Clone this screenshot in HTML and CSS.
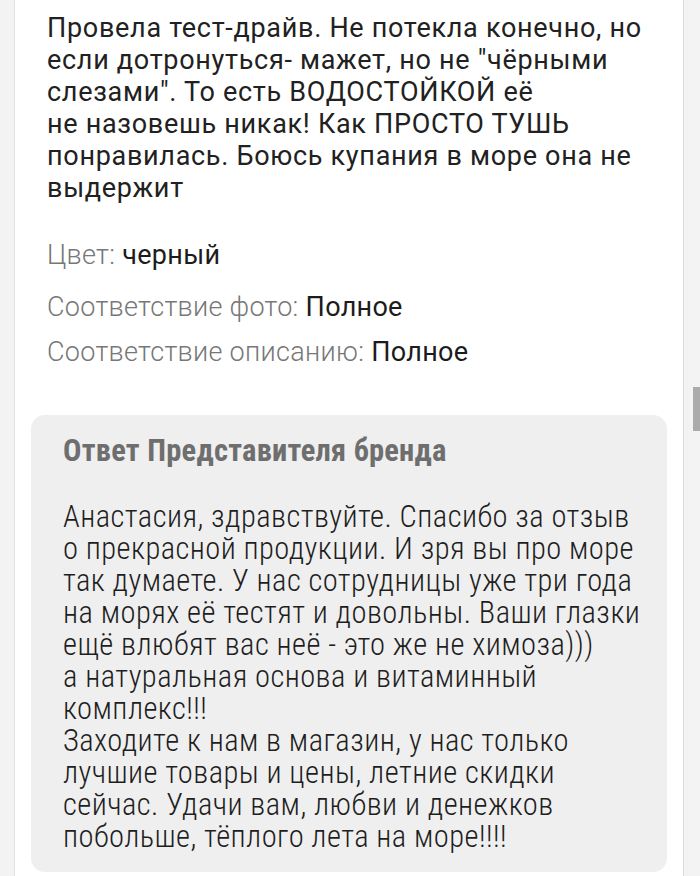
FILE: index.html
```html
<!DOCTYPE html>
<html lang="ru">
<head>
<meta charset="utf-8">
<link rel="stylesheet" href="styles.css">
</head>
<body>
<div class="page">
  <div class="card">
    <p class="review">Провела тест-драйв. Не потекла конечно, но<br>если дотронуться- мажет, но не "чёрными<br>слезами". То есть ВОДОСТОЙКОЙ её<br>не назовешь никак! Как ПРОСТО ТУШЬ<br>понравилась. Боюсь купания в море она не<br>выдержит</p>
    <div class="props">
      <div class="prop p1"><span class="label">Цвет:</span> <span class="value">черный</span></div>
      <div class="prop p2"><span class="label">Соответствие фото:</span> <span class="value">Полное</span></div>
      <div class="prop p3"><span class="label">Соответствие описанию:</span> <span class="value">Полное</span></div>
    </div>
    <div class="answer">
      <div class="answer-title">Ответ Представителя бренда</div>
      <p class="answer-text">Анастасия, здравствуйте. Спасибо за отзыв<br>о прекрасной продукции. И зря вы про море<br>так думаете. У нас сотрудницы уже три года<br>на морях её тестят и довольны. Ваши глазки<br>ещё влюбят вас неё - это же не химоза)))<br>а натуральная основа и витаминный<br>комплекс!!!<br>Заходите к нам в магазин, у нас только<br>лучшие товары и цены, летние скидки<br>сейчас. Удачи вам, любви и денежков<br>побольше, тёплого лета на море!!!!</p>
    </div>
  </div>
  <div class="track">
    <div class="thumb"></div>
  </div>
</div>
</body>
</html>
```

FILE: styles.css
```css
html, body {
  margin: 0;
  padding: 0;
  background: #f3f3f3;
  height: 876px;
  overflow: hidden;
}
.page {
  display: flex;
  height: 876px;
  padding-left: 14px;
}
.card {
  width: 668px;
  background: #ffffff;
  border-left: 1px solid #e2e2e2;
  border-right: 1px solid #dcdcdc;
  padding-top: 12px;
  font-family: Roboto, "Noto Sans", sans-serif;
  color: #212121;
}
.review {
  margin: 0;
  padding-left: 32px;
  font-size: 27px;
  line-height: 32px;
  font-weight: 370;
  white-space: nowrap;
  letter-spacing: 0.7px;
}
.props {
  padding-left: 32px;
  font-size: 27px;
  line-height: 32px;
  white-space: nowrap;
  letter-spacing: 0.3px;
}
.prop.p1 { margin-top: 35px; }
.prop.p2 { margin-top: 20px; }
.prop.p3 { margin-top: 13px; }
.label {
  color: #777777;
  font-weight: 300;
}
.value {
  color: #1c1c1c;
  font-weight: 370;
}
.answer {
  margin: 47px 16px 0 16px;
  background: #efefef;
  border-radius: 14px;
  padding: 20px 32px 19px 32px;
  font-family: "Roboto Condensed", Roboto, sans-serif;
}
.answer-title {
  font-size: 30.5px;
  line-height: 32px;
  font-weight: 700;
  color: #6e6e6e;
  white-space: nowrap;
  letter-spacing: 0.25px;
}
.answer-text {
  margin: 34px 0 0 0;
  font-size: 30.5px;
  line-height: 32px;
  font-weight: 350;
  color: #1e1e1e;
  white-space: nowrap;
  letter-spacing: 0.45px;
}
.track {
  flex: 1;
  display: flex;
  justify-content: flex-end;
}
.thumb {
  margin-top: 387px;
  width: 7px;
  height: 44px;
  background: #ababab;
}
```
